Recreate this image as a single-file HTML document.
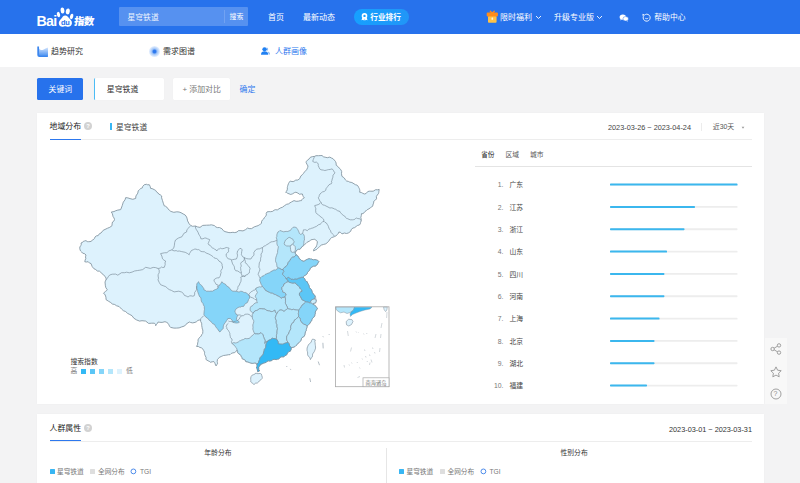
<!DOCTYPE html>
<html><head><meta charset="utf-8"><title>百度指数</title>
<style>
*{box-sizing:border-box;margin:0;padding:0}
html,body{width:800px;height:483px;overflow:hidden;background:#f3f3f4}
body{font-family:"Liberation Sans","Noto Sans CJK SC",sans-serif;font-size:8px;color:#333;position:relative;-webkit-font-smoothing:antialiased}
.page *{position:absolute}
.page{position:absolute;left:0;top:0;width:800px;height:483px;overflow:hidden}
.t{white-space:nowrap;line-height:1}
.hdr{left:0;top:0;width:800px;height:34px;background:#2772ec}
.hdr .t{color:#fff;font-size:8px}
.sub{left:0;top:34px;width:800px;height:32.8px;background:#fff}
.card{background:#fff;box-shadow:0 0 2px rgba(0,0,0,.03)}
.rk{left:490px;width:60px;height:10px;font-size:6.8px;line-height:10px;color:#444;white-space:nowrap}
.rk .no{right:46.5px;top:0;text-align:right;color:#777}
.rk .nm{left:19.4px;top:0}
.bar{left:610px;width:127.5px;height:1.7px;background:#ececec}
.bar i{left:0;top:0;height:1.7px;background:#3bb7ee;display:block}
.q{width:8px;height:8px;border-radius:50%;background:#d2d2d2;color:#fff;font-size:5.8px;line-height:8px;text-align:center;font-weight:bold}
</style></head><body>
<div class="page">
<!-- header -->
<div class="hdr">
  <div class="t" style="left:36.4px;top:14.200px;font-size:14.2px;font-weight:bold;letter-spacing:-0.7px">Bai</div>
  <svg style="left:56px;top:6px" width="18" height="22" viewBox="0 0 18 22">
    <ellipse cx="2.500" cy="8.600" rx="1.600" ry="2.800" fill="#fff" transform="rotate(-15 2.500 8.600)"/>
    <ellipse cx="6.500" cy="4.500" rx="1.900" ry="3" fill="#fff" transform="rotate(-5 6.500 4.500)"/>
    <ellipse cx="11.800" cy="5.400" rx="2" ry="3" fill="#fff" transform="rotate(8 11.800 5.400)"/>
    <ellipse cx="15.600" cy="10.400" rx="1.600" ry="2.800" fill="#fff" transform="rotate(18 15.600 10.400)"/>
    <path d="M9.200 9.400c2 0 3 1.800 4.200 3.200 1.400 1.600 2.800 2.600 2.500 4.800-.3 2.200-2.200 3.300-3.800 3.300-1.200 0-1.800-.5-2.900-.5s-1.700.5-2.900.5c-1.600 0-3.300-1-3.500-3.200-.2-2.200 1.100-3.300 2.400-4.800C6.400 11.200 7.200 9.400 9.200 9.400z" fill="#fff"/>
    <text x="9.200" y="19.200" font-size="7.400" font-weight="bold" text-anchor="middle" fill="#2772ec" font-family="Liberation Sans, sans-serif" letter-spacing="-.4">du</text>
  </svg>
  <div class="t" style="left:73.6px;top:16.900px;font-size:10.4px;font-weight:900;letter-spacing:-0.6px;transform:skewX(-6deg)">指数</div>
  <div style="left:119px;top:7.2px;width:129px;height:18.600px;background:rgba(255,255,255,0.22);border-radius:1px"></div>
  <div style="left:224px;top:10px;width:1px;height:13px;background:rgba(255,255,255,0.16)"></div>
  <div class="t" style="left:127.5px;top:13.700px;font-size:7.8px;color:rgba(255,255,255,0.9)">星穹铁道</div>
  <div class="t" style="left:229.5px;top:13.900px;font-size:6.900px">搜索</div>
  <div class="t" style="left:268px;top:13.700px">首页</div>
  <div class="t" style="left:303px;top:13.700px">最新动态</div>
  <div style="left:353.8px;top:9px;width:55px;height:16px;border-radius:8px;background:linear-gradient(90deg,#16a0ff,#2196f7)"></div>
  <svg style="left:360.800px;top:13.200px" width="7" height="7.600" viewBox="0 0 7 7.600">
    <path d="M1.300 4.400L.5 7.300l1.700-.5.900 1 .4-2.400M5.700 4.400l.8 2.900-1.700-.5-.9 1-.4-2.400" fill="#fff"/>
    <circle cx="3.500" cy="2.900" r="2.800" fill="#fff"/>
    <circle cx="3.500" cy="2.900" r="1.200" fill="#1b9ffd"/>
  </svg>
  <div class="t" style="left:370.200px;top:13.900px;font-weight:bold;font-size:7.700px">行业排行</div>
  <svg style="left:485.500px;top:9.500px" width="13" height="14" viewBox="0 0 13 14">
    <path d="M6.200 3.200L4.300 1.300M6.200 3.200L8.300 1.300" stroke="#ff8c1a" stroke-width="1.300" stroke-linecap="round" fill="none"/>
    <rect x="2" y="6" width="8.600" height="6.700" rx=".9" fill="#ffc247"/>
    <rect x=".7" y="2.600" width="11.200" height="4" rx="1" fill="#ff8c1a"/>
    <rect x="5.500" y="7.600" width="1.600" height="2.200" rx=".3" fill="#fff6dc"/>
  </svg>
  <div class="t" style="left:500px;top:13.700px">限时福利</div>
  <svg style="left:535px;top:15px" width="7" height="5" viewBox="0 0 7 5"><path d="M1 1l2.500 2.500L6 1" fill="none" stroke="#fff" stroke-width=".9"/></svg>
  <div class="t" style="left:554px;top:13.700px">升级专业版</div>
  <svg style="left:595.5px;top:15px" width="7" height="5" viewBox="0 0 7 5"><path d="M1 1l2.500 2.500L6 1" fill="none" stroke="#fff" stroke-width=".9"/></svg>
  <svg style="left:618.600px;top:13.600px" width="10.200" height="8" viewBox="0 0 12 10">
    <ellipse cx="4.400" cy="3.800" rx="4" ry="3.300" fill="#fff"/>
    <path d="M1.800 6.200L1.200 8l2-1z" fill="#fff"/>
    <ellipse cx="8" cy="6" rx="3.400" ry="2.800" fill="#fff" stroke="#2772ec" stroke-width=".6"/>
    <path d="M10 8.200l.6 1.400-1.700-.8z" fill="#fff"/>
  </svg>
  <svg style="left:642px;top:12.800px" width="9" height="9" viewBox="0 0 10 10">
    <path d="M5.200 1.300a3.900 3.900 0 1 1-3.700 2.600L.9 1.500l2 .8a3.900 3.900 0 0 1 2.300-1z" fill="none" stroke="#fff" stroke-width="1" stroke-linejoin="round"/>
    <path d="M3.500 5.600c.5.900 2.600 1 3.400 0" fill="none" stroke="#fff" stroke-width=".9"/>
  </svg>
  <div class="t" style="left:654.300px;top:13.800px;font-size:7.800px">帮助中心</div>
</div>
<!-- sub nav -->
<div class="sub">
  <svg style="left:36.800px;top:11.500px" width="11.200" height="11.400" viewBox="0 0 11 11">
    <defs><linearGradient id="tg" x1="0" y1="0" x2="0" y2="1"><stop offset="0" stop-color="#d3e4fc"/><stop offset="1" stop-color="#4d93f1"/></linearGradient></defs>
    <path d="M1.500 1.600c1.500 2.300 3 2.800 4.500 2 1.500-.8 3-1.900 4.800-2.300v8.200H1.500z" fill="url(#tg)"/>
    <path d="M.3.300h1.700v7.700a.9.900 0 0 0 .9.900h7.800v1.800H2.300a2 2 0 0 1-2-2z" fill="#3b86ee"/>
  </svg>
  <div class="t" style="left:51px;top:14px;color:#333">趋势研究</div>
  <div style="left:148.500px;top:12px;width:11px;height:11px;border-radius:50%;background:radial-gradient(circle,#2d78ee 0,#2d78ee 17%,#9dc3f8 34%,#d9e8fd 62%,rgba(255,255,255,0) 95%)"></div>
  <div class="t" style="left:163px;top:14px;color:#333">需求图谱</div>
  <svg style="left:260.600px;top:13px" width="9.200" height="7.800" viewBox="0 0 11 10" preserveAspectRatio="none">
    <path d="M7 .8a2.300 2.300 0 0 1 0 4.400M8 5.800c1.800.4 2.900 1.600 2.900 3.700H9.300" fill="#8dbdf8"/>
    <ellipse cx="4.300" cy="2.800" rx="2.700" ry="2.500" fill="#2080f2"/>
    <path d="M0 9.800c0-3 1.800-4.300 4.300-4.300s4.300 1.300 4.300 4.300z" fill="#2080f2"/>
  </svg>
  <div class="t" style="left:275px;top:14px;color:#2d78ee">人群画像</div>
</div>
<!-- keyword row -->
<div style="left:37.2px;top:78px;width:45.8px;height:22px;background:#2772ec;border-radius:1.5px"></div>
<div class="t" style="left:48.6px;top:86.200px;color:#fff;font-size:7.8px">关键词</div>
<div style="left:94.4px;top:78px;width:69.600px;height:22px;background:#fff;border-left:1.8px solid #4cbcf5;border-radius:1.5px;box-shadow:0 0 1px rgba(0,0,0,.06)"></div>
<div class="t" style="left:106.8px;top:86.200px;color:#333;font-size:7.9px">星穹铁道</div>
<div style="left:173px;top:78px;width:56.5px;height:22px;background:#fff;border-radius:1.5px;box-shadow:0 0 1px rgba(0,0,0,.06)"></div>
<div class="t" style="left:182.5px;top:86.200px;color:#777;font-size:7.9px">+ 添加对比</div>
<div class="t" style="left:239.5px;top:86.200px;color:#2d78ee;font-size:7.9px">确定</div>

<!-- card 1 -->
<div class="card" style="left:37.3px;top:113px;width:726.600px;height:291.400px"></div>
<div class="t" style="left:49.5px;top:123.300px;font-size:7.9px;color:#222">地域分布</div>
<div class="q" style="left:84px;top:122.300px">?</div>
<div style="left:49.5px;top:139px;width:702px;height:1px;background:#ededed"></div>
<div style="left:49.5px;top:138.600px;width:31.5px;height:1.2px;background:#2d78ee"></div>
<div style="left:110px;top:123px;width:1.9px;height:7px;background:#38b6f3"></div>
<div class="t" style="left:116px;top:124px;font-size:7.8px;color:#444">星穹铁道</div>
<div class="t" style="left:608px;top:123.700px;font-size:7.3px;color:#444">2023-03-26 ~ 2023-04-24</div>
<div style="left:701px;top:123px;width:1px;height:8px;background:#ececec"></div>
<div class="t" style="left:712.8px;top:123.900px;font-size:6.9px;color:#555">近30天</div>
<svg style="left:741px;top:126.300px" width="4" height="3.5" viewBox="0 0 5 4"><path d="M.8.800h3.400L2.500 3.200z" fill="#999"/></svg>

<svg style="left:0;top:0" width="800" height="483" viewBox="0 0 800 483">
<polygon points="80.6,251.0 80.2,250.1 79.8,248.8 79.8,247.0 80.8,245.6 81.3,244.2 81.0,243.0 82.7,242.3 83.5,241.2 84.5,241.0 86.0,240.6 87.2,241.6 88.7,241.7 90.0,241.6 91.0,241.4 92.2,240.3 93.9,239.2 94.5,238.4 95.0,237.0 96.3,235.9 98.2,235.6 99.3,233.8 101.0,233.0 103.2,230.3 107.6,228.2 109.8,227.3 112.0,225.7 112.1,223.9 112.5,222.0 114.1,220.8 114.5,219.5 114.0,217.9 113.1,216.7 112.4,213.8 111.3,212.0 114.0,211.6 115.5,210.8 117.8,210.1 120.7,209.6 122.2,205.7 123.3,202.1 125.0,199.9 125.7,197.6 127.9,197.9 130.0,198.6 132.8,199.3 135.7,198.4 135.9,196.0 137.8,193.1 138.2,190.9 139.4,189.7 140.7,188.5 142.4,187.8 142.8,186.3 144.3,184.7 146.5,184.3 147.7,184.8 149.3,184.7 150.2,186.5 150.6,188.4 152.1,188.6 154.2,189.6 155.6,190.4 156.8,192.2 158.2,193.1 158.8,194.1 160.3,194.8 161.7,196.0 161.6,197.8 162.5,200.6 163.3,203.2 164.2,205.8 165.4,206.2 166.8,207.1 168.0,208.9 169.2,210.0 170.8,211.4 173.8,212.3 176.8,211.8 179.1,212.0 181.0,212.7 183.1,213.9 185.2,215.0 186.6,217.0 187.2,218.9 187.6,220.9 189.2,223.9 190.8,225.5 192.5,226.3 193.9,226.2 195.4,226.0 197.5,226.9 200.0,227.4 202.7,225.4 206.6,225.2 209.4,225.1 211.4,224.8 214.4,225.6 215.9,227.0 217.5,227.6 219.4,227.5 221.9,228.7 223.4,230.7 225.0,231.6 227.0,232.1 228.9,232.6 230.8,232.6 232.9,232.3 234.8,232.6 237.1,232.0 238.3,230.7 240.1,230.6 243.0,230.9 245.6,229.6 247.6,228.0 249.1,228.6 251.6,228.6 254.2,226.9 256.9,226.0 258.2,225.6 259.5,224.7 260.5,224.1 261.5,223.3 261.5,221.8 262.3,220.1 263.7,219.0 264.3,217.7 265.2,216.8 266.4,215.0 266.2,213.4 267.0,211.9 269.1,211.6 270.7,211.7 272.7,211.3 274.1,210.2 275.3,209.7 277.3,209.9 280.3,208.0 282.5,207.2 284.6,205.6 286.6,204.3 288.5,203.9 290.0,202.8 291.6,201.9 294.0,200.6 296.1,201.3 298.3,201.2 300.2,200.7 301.5,200.6 301.9,199.6 302.8,198.6 304.3,197.8 303.2,196.4 302.7,195.2 302.4,194.0 300.9,194.0 299.6,194.3 297.9,193.1 295.9,192.2 294.3,192.7 292.6,193.8 291.2,194.3 290.3,194.4 289.1,193.8 287.6,193.3 286.7,192.5 285.6,192.2 286.8,191.0 287.4,189.1 287.3,187.6 287.5,186.6 287.9,185.2 288.6,183.3 289.4,182.1 290.3,181.0 292.0,181.6 293.9,181.4 295.7,180.1 297.8,180.0 299.6,178.8 300.9,175.9 302.4,174.7 303.4,173.5 304.5,171.9 306.6,169.8 307.6,167.7 308.0,166.0 306.9,164.2 306.1,162.4 306.4,161.3 307.3,160.3 308.9,159.2 309.9,157.7 310.9,157.1 312.6,156.6 314.5,156.4 316.0,155.7 318.6,155.7 320.1,155.6 322.0,155.5 323.5,156.8 325.1,157.2 327.3,157.7 329.8,157.1 331.6,158.1 332.9,158.6 334.3,160.1 335.4,161.4 336.1,163.0 336.2,165.2 337.9,166.5 339.1,168.0 340.8,169.6 341.7,171.6 341.5,173.7 341.9,176.3 343.1,177.1 344.3,178.0 345.4,179.9 346.6,181.0 348.4,181.4 349.7,182.1 351.9,182.5 354.0,183.8 355.6,184.8 357.1,185.1 357.9,185.9 358.7,187.5 359.3,188.5 359.7,189.7 359.9,190.9 359.6,192.2 361.3,192.5 362.4,193.1 364.3,194.0 366.1,193.5 367.7,191.6 369.2,191.2 370.8,191.2 373.2,191.2 375.7,189.7 377.4,189.8 379.2,189.4 378.9,191.2 378.8,192.3 378.4,193.7 377.3,195.0 376.4,196.4 376.5,198.8 375.4,200.1 373.6,201.5 373.7,203.0 373.2,203.9 372.7,206.0 371.7,207.0 370.3,207.8 369.0,208.8 367.1,209.8 366.1,210.8 365.1,211.4 364.2,212.7 362.9,213.6 361.5,213.6 361.3,215.6 360.8,217.6 361.2,219.1 361.3,220.5 360.6,222.4 360.3,223.8 359.4,225.0 357.6,225.4 356.4,226.3 354.5,227.7 353.0,228.0 351.4,229.3 350.6,231.4 348.3,233.0 346.4,233.5 344.4,233.0 342.0,233.9 340.5,232.4 338.9,232.0 338.5,233.2 337.6,234.3 336.0,235.8 334.3,236.7 331.6,237.6 330.1,239.0 328.6,241.4 325.9,243.8 323.3,244.5 321.3,245.1 319.7,246.5 318.5,247.6 317.5,248.5 316.3,249.7 315.2,250.0 313.6,251.0 313.7,249.7 314.6,248.3 316.1,247.0 316.6,245.5 317.0,244.4 317.2,243.2 317.4,241.8 316.6,240.6 315.8,240.1 314.8,239.3 313.2,239.4 312.1,239.6 311.0,239.8 310.4,240.4 309.3,241.2 308.0,241.8 306.7,242.6 305.9,243.5 304.7,244.5 303.5,245.6 301.7,246.8 300.9,248.3 299.8,249.2 298.6,249.1 297.6,249.6 296.0,251.0 295.5,251.9 295.0,253.0 296.0,254.8 297.9,256.1 298.7,257.5 299.3,258.8 300.7,259.6 301.9,260.8 304.0,261.4 304.8,260.8 306.2,259.8 307.5,259.3 309.1,258.7 310.4,259.1 311.5,259.1 313.4,259.9 314.7,259.6 316.4,260.0 317.6,260.3 318.8,261.5 317.8,263.1 317.5,264.3 316.2,265.0 315.6,266.1 313.7,266.0 311.9,267.0 310.2,268.3 309.7,269.8 309.1,270.7 308.2,271.7 307.5,272.5 306.9,273.9 305.7,275.1 304.5,275.5 303.7,276.4 303.5,277.5 304.7,278.8 305.3,280.5 306.1,281.3 307.2,281.7 307.7,283.2 308.7,284.8 309.2,286.4 309.4,287.5 310.5,289.0 311.4,289.6 312.0,291.3 312.3,292.6 312.9,293.6 314.1,294.6 315.2,296.2 315.6,297.5 315.7,298.5 316.3,300.5 316.0,301.5 315.5,303.0 314.1,303.1 312.5,304.0 314.4,305.1 316.0,306.4 316.7,307.5 317.4,308.6 316.1,310.4 315.2,312.2 315.3,313.4 314.9,314.4 314.7,315.8 313.8,317.2 312.4,318.4 311.9,319.4 311.6,320.9 310.6,321.6 310.0,323.1 308.7,324.5 307.9,325.4 307.0,326.0 306.8,327.9 306.2,329.5 306.1,330.7 305.4,331.8 304.9,333.9 304.8,334.9 304.2,336.3 302.1,337.5 301.3,338.8 300.8,340.8 299.6,341.9 298.2,343.0 297.0,344.7 295.8,345.6 294.9,346.6 293.0,347.3 291.2,347.5 291.1,349.3 290.3,351.2 288.9,351.5 288.1,352.3 287.1,353.8 286.6,354.9 285.0,355.6 283.9,356.8 282.7,356.8 281.0,356.8 280.0,357.7 278.7,358.9 277.6,359.1 276.3,359.6 274.2,359.3 272.8,359.6 271.7,360.5 269.7,361.0 268.4,360.8 267.1,361.3 266.1,362.4 264.5,362.8 263.1,363.2 262.1,363.9 260.5,364.2 259.9,365.8 258.6,367.0 258.7,368.3 258.7,369.5 259.6,370.8 257.7,371.7 257.4,370.0 257.2,368.7 256.4,368.0 257.0,366.5 257.1,365.4 256.8,364.2 255.9,363.0 254.8,362.9 253.4,363.2 252.2,363.3 250.9,363.0 249.2,362.5 248.0,361.9 245.8,361.6 245.2,360.1 244.3,359.5 242.2,358.7 242.0,357.4 241.2,356.3 240.8,355.2 240.0,354.3 238.4,353.5 237.7,352.4 237.7,351.3 237.1,350.0 236.4,351.1 235.6,351.9 234.3,352.7 232.8,352.9 231.2,353.5 230.0,354.7 228.6,354.7 227.0,355.0 225.2,355.3 223.4,355.5 222.5,355.9 221.2,356.5 219.3,357.4 218.7,358.2 217.5,359.4 217.2,361.4 217.4,362.4 217.5,363.8 216.8,364.7 216.1,365.9 215.5,365.0 215.1,363.7 214.6,362.5 213.9,361.6 212.2,361.8 210.3,362.3 209.7,361.6 208.3,360.9 206.9,360.1 205.9,359.4 206.1,357.6 205.3,355.9 204.7,354.6 204.5,353.6 204.6,352.2 203.6,350.3 202.6,348.9 201.6,347.8 199.9,347.5 198.7,346.6 196.5,346.4 197.5,344.8 197.7,342.9 198.1,341.4 198.0,339.9 198.8,338.3 199.9,337.3 201.2,336.0 201.6,334.8 202.7,333.4 202.8,331.5 202.8,329.9 202.3,329.0 202.1,327.6 201.7,325.4 201.7,324.1 201.6,323.2 200.7,321.5 200.5,320.0 199.1,320.0 197.8,320.5 196.5,321.7 195.0,322.4 192.7,322.9 190.7,322.5 189.5,322.0 188.0,322.8 185.9,324.4 184.6,326.0 181.7,326.9 179.1,327.9 176.4,328.1 173.9,328.1 170.6,327.4 169.5,326.2 168.6,324.2 168.0,323.3 166.8,322.4 165.0,321.7 162.1,322.4 159.8,322.3 158.1,322.0 157.3,323.6 156.3,324.4 155.7,325.7 155.6,324.5 154.4,323.2 151.7,323.2 148.6,323.4 145.7,321.1 142.0,320.7 139.6,321.1 136.5,319.9 133.8,318.2 132.0,315.7 129.8,314.5 127.6,313.4 125.7,311.6 123.4,310.7 121.6,309.1 119.1,306.5 116.6,305.8 114.7,304.5 112.3,304.0 110.8,302.6 108.3,301.1 106.0,299.6 106.0,297.8 105.6,296.0 104.7,294.1 103.5,293.4 104.2,292.5 105.5,291.4 106.6,290.6 107.2,289.6 105.9,287.8 105.4,285.8 105.0,282.0 106.0,279.7 106.0,278.2 105.4,276.7 104.1,275.7 103.5,274.7 101.8,273.6 100.7,272.1 99.5,271.2 97.3,271.0 95.8,269.6 93.9,268.7 92.2,266.6 91.0,263.5 89.5,263.1 88.2,261.7 86.5,262.0 84.8,261.8 85.1,260.2 85.8,258.5 85.5,256.9 86.0,255.0 84.8,253.8 82.7,253.2 81.7,252.0" fill="#DDF2FD" stroke="#80919d" stroke-width="0.85" stroke-linejoin="round"/>
<polygon points="277.0,240.2 276.8,239.1 276.3,237.6 276.9,236.3 276.8,234.9 277.4,233.1 278.0,231.9 278.9,231.6 279.9,230.5 281.1,230.9 282.1,231.3 283.6,231.8 286.1,231.4 287.9,231.5 289.0,230.9 290.4,230.5 291.4,228.9 292.9,227.4 294.1,227.1 296.0,227.4 297.1,228.4 297.6,229.2 298.5,231.1 299.0,232.1 299.2,233.2 300.4,234.3 301.5,234.0 302.6,233.5 303.7,234.4 304.4,236.4 304.3,238.1 304.5,240.0 304.0,240.8 303.9,242.1 303.8,243.8 303.5,245.6 301.7,246.8 300.9,248.3 299.8,249.2 298.6,249.1 297.6,249.6 296.0,251.0 295.5,251.9 295.0,253.0 296.0,254.8 295.2,256.0 294.0,257.1 292.7,257.1 291.7,257.9 290.6,258.9 290.2,260.4 289.2,261.2 288.0,262.8 287.8,264.1 286.9,265.3 286.0,266.6 284.8,267.2 283.4,268.5 283.0,269.7 281.2,269.4 279.6,268.4 278.4,268.0 277.0,267.0 276.8,265.2 276.6,263.4 275.7,261.8 275.5,260.5 275.6,259.3 275.9,257.3 276.5,255.6 277.0,254.0 277.6,252.6 277.6,251.0 278.0,248.8 278.4,246.7 277.3,245.3 276.9,243.6 276.9,242.2" fill="#B4E6FB" stroke="#80919d" stroke-width="0.7" stroke-linejoin="round"/>
<polygon points="284.8,241.7 285.4,240.2 286.7,239.2 288.2,237.8 289.8,237.4 291.2,238.4 292.9,239.2 293.2,240.3 294.2,241.7 293.5,243.4 292.5,244.2 291.2,245.4 289.8,246.0 288.6,246.0 286.7,246.0 285.7,245.4 284.6,244.8 284.2,243.3" fill="#C9EDFC" stroke="#80919d" stroke-width="0.7" stroke-linejoin="round"/>
<polygon points="292.5,244.2 294.2,245.4 295.1,246.4 295.3,247.5 295.4,249.2 295.1,250.7 295.0,252.3 294.0,252.0 292.6,252.4 291.0,251.6 290.6,249.5 290.4,247.9 290.3,246.7 290.8,245.5" fill="#DDF2FD" stroke="#80919d" stroke-width="0.7" stroke-linejoin="round"/>
<polygon points="198.7,281.7 199.3,283.6 200.7,284.7 201.6,285.4 202.8,287.2 203.7,288.2 203.8,289.7 205.3,290.3 206.2,291.2 208.1,291.2 209.9,291.3 210.9,291.1 212.5,291.2 214.2,290.1 215.5,289.5 216.8,289.0 218.3,287.9 218.4,286.5 219.0,285.4 220.0,284.8 220.8,283.5 221.9,281.7 223.3,283.3 224.8,283.9 226.0,284.7 226.5,285.9 228.4,286.8 229.2,288.0 230.1,288.6 231.3,290.4 232.9,291.2 234.9,291.2 236.5,291.4 238.5,291.9 239.8,291.8 240.7,291.2 242.1,291.4 243.5,292.2 244.7,292.6 245.8,292.6 247.1,293.5 248.7,294.8 249.4,295.9 249.6,296.9 249.4,298.4 248.5,299.5 248.1,301.0 247.2,302.8 245.5,303.5 244.7,304.6 243.6,306.4 241.7,306.4 240.6,307.1 239.3,307.1 238.1,307.5 237.1,308.2 235.7,309.3 235.2,310.5 234.9,312.2 235.7,312.9 236.1,314.3 237.8,315.1 237.3,316.3 236.8,317.4 236.4,319.4 237.1,320.1 238.3,320.9 239.3,322.3 238.2,322.8 236.4,323.0 234.5,322.7 232.8,322.3 232.6,321.3 231.9,319.9 230.6,318.7 229.1,318.4 227.7,318.7 226.9,320.4 226.2,321.0 225.5,322.3 224.1,324.1 223.4,325.8 223.2,327.1 223.3,328.5 222.0,329.6 221.0,330.4 220.0,332.0 219.0,331.3 218.3,330.1 217.3,328.5 216.2,327.6 215.6,326.6 215.1,325.7 214.6,324.5 212.7,323.7 211.7,322.6 210.3,320.9 209.2,320.3 208.3,319.1 207.3,318.0 205.9,317.2 204.8,315.9 203.8,314.3 204.0,313.3 204.1,311.8 204.3,310.3 204.5,309.3 204.3,308.0 204.3,306.4 203.4,304.9 203.0,303.5 201.8,302.1 201.3,301.1 201.0,299.1 200.9,297.7 199.8,296.9 199.3,296.0 198.7,294.5 198.0,292.6 197.6,291.6 197.6,290.4 196.7,288.8 196.5,286.8 196.8,285.2 196.8,283.9 197.7,282.6" fill="#85D5F9" stroke="#80919d" stroke-width="0.7" stroke-linejoin="round"/>
<polygon points="260.1,278.1 261.1,277.3 262.1,276.3 263.9,275.7 265.0,274.5 266.7,273.8 268.0,273.2 269.7,272.8 270.7,271.6 272.0,271.1 274.0,269.9 275.5,270.0 277.1,268.9 278.4,268.0 279.6,268.4 281.2,269.4 283.0,269.7 284.0,271.6 282.9,272.9 282.6,274.5 283.5,275.4 284.5,276.5 285.4,277.3 286.2,278.8 287.7,279.9 288.4,281.7 287.5,282.0 286.1,282.4 285.2,283.5 284.0,283.9 283.4,286.0 281.9,287.5 281.9,289.4 282.7,290.7 282.6,291.9 284.7,292.6 286.2,294.0 285.7,295.6 284.8,297.0 283.9,297.4 282.6,297.4 281.2,298.4 280.6,297.6 279.5,296.8 278.3,296.2 276.8,295.5 275.5,294.6 274.1,294.3 272.5,293.3 270.6,293.1 269.7,292.5 268.1,291.9 267.1,291.2 265.6,290.6 264.5,289.0 263.3,287.3 262.3,286.5 261.7,285.0 260.9,284.1 260.8,283.0 260.1,281.7 259.7,280.2" fill="#85D5F9" stroke="#80919d" stroke-width="0.7" stroke-linejoin="round"/>
<polygon points="296.0,254.8 297.9,256.1 298.7,257.5 299.3,258.8 300.7,259.6 301.9,260.8 304.0,261.4 304.8,260.8 306.2,259.8 307.5,259.3 309.1,258.7 310.4,259.1 311.5,259.1 313.4,259.9 314.7,259.6 316.4,260.0 317.6,260.3 318.8,261.5 317.8,263.1 317.5,264.3 316.2,265.0 315.6,266.1 313.7,266.0 311.9,267.0 310.2,268.3 309.7,269.8 309.1,270.7 308.2,271.7 307.5,272.5 306.9,273.9 305.7,275.1 304.5,275.5 303.7,276.4 303.5,277.5 301.8,277.3 300.0,278.1 298.6,278.3 297.0,279.3 295.0,279.1 293.5,279.6 292.1,279.2 291.0,279.5 289.6,278.0 288.4,277.4 287.4,278.0 286.2,278.8 285.4,277.3 284.5,276.5 283.5,275.4 282.6,274.5 282.9,272.9 284.0,271.6 283.0,269.7 283.4,268.5 284.8,267.2 286.0,266.6 286.9,265.3 287.8,264.1 288.0,262.8 289.2,261.2 290.2,260.4 290.6,258.9 291.7,257.9 292.7,257.1 294.0,257.1 295.2,256.0" fill="#85D5F9" stroke="#80919d" stroke-width="0.7" stroke-linejoin="round"/>
<polygon points="288.4,281.7 289.7,282.4 291.3,282.8 292.9,283.1 294.9,282.8 296.0,283.5 297.1,285.0 298.5,286.0 299.7,287.1 300.0,288.3 300.7,289.1 301.6,289.9 302.2,291.2 300.7,291.9 299.7,292.8 299.3,294.0 299.6,295.3 300.0,296.2 300.9,297.0 301.2,298.1 302.2,299.9 304.1,300.6 305.8,301.8 304.4,303.1 303.6,304.2 302.0,305.2 301.2,306.7 300.7,307.8 299.3,309.0 298.6,310.7 297.5,310.1 296.4,310.0 294.9,309.8 293.5,309.3 291.8,309.8 290.6,309.3 288.8,309.0 287.7,308.6 287.3,307.0 286.8,306.1 286.2,304.9 285.5,303.7 285.3,302.8 285.5,301.3 285.4,300.2 285.5,298.9 284.8,297.0 285.7,295.6 286.2,294.0 284.7,292.6 282.6,291.9 282.7,290.7 281.9,289.4 281.9,287.5 283.4,286.0 284.0,283.9 285.2,283.5 286.1,282.4 287.5,282.0" fill="#B4E6FB" stroke="#80919d" stroke-width="0.7" stroke-linejoin="round"/>
<polygon points="288.4,277.4 289.6,278.0 291.0,279.5 292.1,279.2 293.5,279.6 295.0,279.1 297.0,279.3 298.6,278.3 300.0,278.1 301.8,277.3 303.5,277.5 304.7,278.8 305.3,280.5 306.1,281.3 307.2,281.7 307.7,283.2 308.7,284.8 309.2,286.4 309.4,287.5 310.5,289.0 311.4,289.6 312.0,291.3 312.3,292.6 312.9,293.6 314.1,294.6 315.2,296.2 314.5,297.6 314.5,299.1 313.1,299.3 311.6,299.9 310.7,301.7 309.4,302.8 308.1,302.1 306.8,302.1 305.8,301.8 304.1,300.6 302.2,299.9 301.2,298.1 300.9,297.0 300.0,296.2 299.6,295.3 299.3,294.0 299.7,292.8 300.7,291.9 302.2,291.2 301.6,289.9 300.7,289.1 300.0,288.3 299.7,287.1 298.5,286.0 297.1,285.0 296.0,283.5 294.9,282.8 292.9,283.1 291.3,282.8 289.7,282.4 288.4,281.7 287.7,279.9 286.2,278.8 287.4,278.0" fill="#5BC6F6" stroke="#80919d" stroke-width="0.7" stroke-linejoin="round"/>
<polygon points="314.5,299.1 315.5,299.9 316.3,300.5 316.0,301.5 315.5,303.0 314.1,303.1 312.5,304.0 311.2,303.0 309.4,302.8 310.7,301.7 311.6,299.9 313.1,299.3" fill="#C9EDFC" stroke="#80919d" stroke-width="0.7" stroke-linejoin="round"/>
<polygon points="305.8,301.8 306.8,302.1 308.1,302.1 309.4,302.8 311.2,303.0 312.5,304.0 314.4,305.1 316.0,306.4 316.7,307.5 317.4,308.6 316.1,310.4 315.2,312.2 315.3,313.4 314.9,314.4 314.7,315.8 313.8,317.2 312.4,318.4 311.9,319.4 311.6,320.9 310.6,321.6 310.0,323.1 308.7,324.5 307.9,325.4 307.0,326.0 306.3,325.2 305.2,324.7 303.3,324.0 302.1,323.0 301.3,321.9 300.6,321.0 300.3,319.3 299.8,317.9 298.5,316.5 298.6,315.1 298.2,313.7 298.5,312.5 298.6,310.7 299.3,309.0 300.7,307.8 301.2,306.7 302.0,305.2 303.6,304.2 304.4,303.1" fill="#85D5F9" stroke="#80919d" stroke-width="0.7" stroke-linejoin="round"/>
<polygon points="255.9,288.3 257.0,287.6 258.0,287.3 259.6,286.8 260.7,287.0 262.3,286.5 263.3,287.3 264.5,289.0 265.6,290.6 267.1,291.2 268.1,291.9 269.7,292.5 270.6,293.1 272.5,293.3 274.1,294.3 275.5,294.6 276.8,295.5 278.3,296.2 279.5,296.8 280.6,297.6 281.2,298.4 282.6,297.4 283.9,297.4 284.8,297.0 285.5,298.9 285.4,300.2 285.5,301.3 285.3,302.8 285.5,303.7 286.2,304.9 286.8,306.1 287.3,307.0 287.7,308.6 286.6,309.4 285.5,310.2 284.0,311.5 282.9,310.7 282.1,310.1 280.0,310.0 279.1,310.5 278.1,311.7 277.3,312.9 277.0,313.8 276.2,313.1 275.2,312.1 274.8,310.1 273.5,311.0 272.5,311.5 271.2,311.6 269.5,311.0 268.2,310.8 266.7,310.4 265.4,309.4 264.1,308.9 263.1,309.0 261.3,308.7 259.6,308.7 258.6,309.2 257.7,310.2 256.4,310.5 255.2,310.9 253.9,311.9 253.0,313.6 252.3,312.4 251.5,311.9 250.5,310.9 250.1,310.0 250.2,307.9 250.9,306.4 252.4,305.9 252.8,305.1 253.8,304.2 255.0,303.1 256.3,302.7 257.4,302.8 256.8,301.4 256.7,299.9 256.5,298.4 255.9,297.7 255.2,296.2 256.2,294.4 257.4,292.6 256.5,290.6 255.9,289.7" fill="#B4E6FB" stroke="#80919d" stroke-width="0.7" stroke-linejoin="round"/>
<polygon points="255.2,310.9 256.4,310.5 257.7,310.2 258.6,309.2 259.6,308.7 261.3,308.7 263.1,309.0 264.1,308.9 265.4,309.4 266.7,310.4 268.2,310.8 269.5,311.0 271.2,311.6 272.5,311.5 273.5,311.0 274.8,310.1 275.2,312.1 276.2,313.1 277.0,313.8 276.3,314.4 275.9,315.9 275.3,317.5 275.5,318.8 276.3,320.4 276.2,322.2 276.3,323.4 277.0,324.6 277.0,326.9 277.5,328.4 277.2,330.2 277.0,331.9 277.0,333.5 276.6,334.6 276.4,335.7 276.5,337.0 276.4,338.4 277.2,340.0 276.1,339.1 275.0,338.7 273.8,338.6 272.6,338.2 271.2,338.9 270.5,339.8 268.9,340.1 267.9,341.0 266.1,341.8 265.2,342.3 264.6,343.5 264.9,342.0 265.1,340.0 264.3,338.9 263.9,337.7 263.4,336.3 263.1,334.9 262.2,333.9 261.0,332.6 260.0,333.5 258.4,334.0 256.6,333.9 255.2,334.0 254.5,333.3 253.8,332.0 253.4,330.8 252.8,329.1 253.0,327.5 252.9,326.1 252.8,324.9 253.3,323.6 253.8,321.7 253.6,320.4 252.7,319.1 252.3,318.0 252.3,316.7 252.2,314.7 253.0,313.6 253.9,311.9" fill="#B4E6FB" stroke="#80919d" stroke-width="0.7" stroke-linejoin="round"/>
<polygon points="277.0,313.8 277.3,312.9 278.1,311.7 279.1,310.5 280.0,310.0 282.1,310.1 282.9,310.7 284.0,311.5 285.5,310.2 286.6,309.4 287.7,308.6 288.8,309.0 290.6,309.3 291.8,309.8 293.5,309.3 294.9,309.8 296.4,310.0 297.5,310.1 298.6,310.7 298.5,312.5 298.2,313.7 298.6,315.1 298.5,316.5 297.9,317.5 296.5,318.5 295.7,319.4 294.6,319.9 294.0,321.4 293.5,322.5 292.0,323.3 291.2,325.1 290.6,327.0 290.9,328.5 290.2,330.1 289.3,331.7 288.4,334.3 286.9,335.7 286.7,337.0 286.6,339.0 287.1,340.8 287.8,342.0 288.4,342.8 287.5,342.5 286.1,342.9 284.7,343.3 283.8,343.8 282.5,344.2 280.3,344.1 278.2,343.8 278.2,341.8 277.2,340.0 276.4,338.4 276.5,337.0 276.4,335.7 276.6,334.6 277.0,333.5 277.0,331.9 277.2,330.2 277.5,328.4 277.0,326.9 277.0,324.6 276.3,323.4 276.2,322.2 276.3,320.4 275.5,318.8 275.3,317.5 275.9,315.9 276.3,314.4" fill="#B4E6FB" stroke="#80919d" stroke-width="0.7" stroke-linejoin="round"/>
<polygon points="298.5,316.5 299.8,317.9 300.3,319.3 300.6,321.0 301.3,321.9 302.1,323.0 303.3,324.0 305.2,324.7 306.3,325.2 307.0,326.0 306.8,327.9 306.2,329.5 306.1,330.7 305.4,331.8 304.9,333.9 304.8,334.9 304.2,336.3 302.1,337.5 301.3,338.8 300.8,340.8 299.6,341.9 298.2,343.0 297.0,344.7 295.8,345.6 294.9,346.6 293.0,347.3 291.2,347.5 290.1,346.6 289.3,345.1 289.2,343.9 288.4,342.8 287.8,342.0 287.1,340.8 286.6,339.0 286.7,337.0 286.9,335.7 288.4,334.3 289.3,331.7 290.2,330.1 290.9,328.5 290.6,327.0 291.2,325.1 292.0,323.3 293.5,322.5 294.0,321.4 294.6,319.9 295.7,319.4 296.5,318.5 297.9,317.5" fill="#B4E6FB" stroke="#80919d" stroke-width="0.7" stroke-linejoin="round"/>
<polygon points="232.0,343.5 233.8,342.6 235.3,343.0 236.4,342.8 238.2,342.1 239.5,340.9 240.7,340.6 241.8,339.9 243.4,339.6 245.1,338.4 246.2,338.7 247.9,338.6 249.3,338.4 250.1,337.7 250.7,336.8 251.9,335.9 253.3,334.7 254.5,333.3 255.2,334.0 256.6,333.9 258.4,334.0 260.0,333.5 261.0,332.6 262.2,333.9 263.1,334.9 263.4,336.3 263.9,337.7 264.3,338.9 265.1,340.0 264.9,342.0 264.6,343.5 265.2,342.3 266.1,341.8 267.9,341.0 266.9,342.2 266.1,343.8 265.9,344.9 265.8,346.2 265.6,347.4 265.1,348.4 264.2,349.7 264.1,350.9 263.6,352.1 263.3,354.0 262.6,354.9 261.6,356.1 259.9,357.9 259.6,359.6 258.7,361.5 258.4,362.8 256.8,364.2 255.9,363.0 254.8,362.9 253.4,363.2 252.2,363.3 250.9,363.0 249.2,362.5 248.0,361.9 245.8,361.6 245.2,360.1 244.3,359.5 242.2,358.7 242.0,357.4 241.2,356.3 240.8,355.2 240.0,354.3 238.4,353.5 237.7,352.4 237.7,351.3 237.1,350.0 236.8,348.8 236.2,347.6 234.9,346.4 233.9,344.8 232.6,344.2" fill="#B4E6FB" stroke="#80919d" stroke-width="0.7" stroke-linejoin="round"/>
<polygon points="267.9,341.0 268.9,340.1 270.5,339.8 271.2,338.9 272.6,338.2 273.8,338.6 275.0,338.7 276.1,339.1 277.2,340.0 278.2,341.8 278.2,343.8 280.3,344.1 282.5,344.2 283.8,343.8 284.7,343.3 286.1,342.9 287.5,342.5 288.4,342.8 289.2,343.9 289.3,345.1 290.1,346.6 291.2,347.5 291.1,349.3 290.3,351.2 288.9,351.5 288.1,352.3 287.1,353.8 286.6,354.9 285.0,355.6 283.9,356.8 282.7,356.8 281.0,356.8 280.0,357.7 278.7,358.9 277.6,359.1 276.3,359.6 274.2,359.3 272.8,359.6 271.7,360.5 269.7,361.0 268.4,360.8 267.1,361.3 266.1,362.4 264.5,362.8 263.1,363.2 262.1,363.9 260.5,364.2 259.9,365.8 258.6,367.0 258.7,368.3 258.7,369.5 259.6,370.8 257.7,371.7 257.4,370.0 257.2,368.7 256.4,368.0 257.0,366.5 257.1,365.4 256.8,364.2 258.4,362.8 258.7,361.5 259.6,359.6 259.9,357.9 261.6,356.1 262.6,354.9 263.3,354.0 263.6,352.1 264.1,350.9 264.2,349.7 265.1,348.4 265.6,347.4 265.8,346.2 265.9,344.9 266.1,343.8 266.9,342.2" fill="#33B9F5" stroke="#80919d" stroke-width="0.7" stroke-linejoin="round"/>
<polygon points="240.0,248.2 241.4,249.0 242.2,249.6 241.7,251.6 241.5,253.5 241.4,254.7 241.9,255.5 242.6,256.7 244.3,257.6 244.7,259.3 245.1,260.4 245.4,261.6 245.1,262.7 246.6,263.6 247.4,264.8 248.0,265.6 249.3,267.0 250.1,268.5 249.5,270.5 249.5,271.6 249.4,272.8 248.3,273.4 247.6,274.6 245.8,275.0 245.1,276.4 243.6,276.0 242.2,276.4 241.9,275.0 241.3,273.8 241.4,272.8 240.2,272.7 239.3,272.1 237.8,271.0 235.7,270.7 234.6,269.1 234.5,267.8 234.2,266.3 233.6,265.4 232.6,263.9 232.0,262.0 231.6,260.8 231.3,259.8 232.7,259.7 234.2,259.3 236.4,259.0 237.0,257.6 237.3,256.7 237.5,255.2 237.1,253.3 237.4,252.0 237.5,250.9 239.0,249.6" fill="#DDF2FD" stroke="#80919d" stroke-width="0.7" stroke-linejoin="round"/>
<polygon points="251.2,376.3 252.2,375.1 253.7,374.6 255.2,373.9 255.8,373.0 256.9,373.5 258.0,373.7 260.1,373.4 261.4,374.1 261.8,375.6 262.3,377.3 262.1,378.5 260.9,379.8 259.6,380.6 258.6,382.0 257.2,383.1 255.7,383.1 254.7,383.7 254.0,384.7 252.8,383.3 251.6,382.7 250.8,382.0 250.8,380.7 250.7,379.5 250.7,378.0" fill="#DDF2FD" stroke="#80919d" stroke-width="0.7" stroke-linejoin="round"/>
<polygon points="312.6,339.1 313.8,339.4 315.4,340.0 314.8,341.3 315.1,342.7 315.2,344.2 315.4,345.6 315.6,348.1 314.9,350.2 314.2,351.8 312.6,354.0 312.5,355.9 312.2,357.2 311.0,358.3 310.4,359.6 309.9,357.6 308.8,356.6 308.0,355.9 307.5,354.2 307.7,353.0 307.4,351.6 307.0,350.3 307.1,348.0 307.8,346.2 308.3,345.0 309.3,343.8 310.3,342.9 311.1,342.4 311.7,340.3" fill="#DDF2FD" stroke="#80919d" stroke-width="0.7" stroke-linejoin="round"/>
<polyline points="106.0,279.7 107.2,278.6 108.2,276.8 109.7,275.0 112.2,274.2 115.7,274.1 117.8,275.2 121.5,272.7 124.6,272.7 126.6,272.2 129.3,272.8 132.1,272.1 134.5,271.0 137.6,270.5 139.8,270.2 142.7,269.6 145.7,267.3 150.3,268.4 153.2,267.4 155.6,267.6 158.1,268.5" fill="none" stroke="#80919d" stroke-width="0.7" stroke-linejoin="round"/>
<polyline points="158.1,268.5 160.2,268.1 161.6,267.0 162.7,267.5 164.3,267.3 164.8,265.8 165.2,264.6 165.0,262.9 165.6,261.0 164.0,260.2 162.5,258.8 161.9,256.2 160.6,253.6 164.4,252.8 166.9,252.7 168.9,250.9 171.8,249.9" fill="none" stroke="#80919d" stroke-width="0.7" stroke-linejoin="round"/>
<polyline points="171.8,249.9 173.7,248.0 174.3,245.8 174.7,242.4 175.5,240.0 178.3,238.1 182.0,236.7 183.9,233.3 186.6,232.0 186.9,229.7 188.8,227.8 190.0,226.4 190.8,225.5" fill="none" stroke="#80919d" stroke-width="0.7" stroke-linejoin="round"/>
<polyline points="158.1,268.5 159.2,270.1 159.2,272.8 158.2,274.5 158.1,276.0 158.5,278.2 158.0,279.8 159.2,282.4 160.6,284.7 163.1,285.7 165.8,286.7 167.8,288.6 169.3,289.6 171.4,290.4 174.1,291.9 178.8,291.2 181.7,292.1 183.3,293.4 184.4,295.4 186.2,296.0 188.0,297.0 189.7,295.9 191.0,295.8 192.7,296.2 194.2,295.8 194.7,294.1 194.6,292.5 195.7,291.1 196.6,289.6 196.7,288.1 196.8,286.0" fill="none" stroke="#80919d" stroke-width="0.7" stroke-linejoin="round"/>
<polyline points="203.7,316.0 202.9,316.5 201.9,317.3 200.8,318.6 200.5,320.0" fill="none" stroke="#80919d" stroke-width="0.7" stroke-linejoin="round"/>
<polyline points="171.8,249.9 174.1,250.9 176.2,250.6 177.4,251.2 179.3,251.0 181.7,251.6 185.2,252.3 187.7,253.6 189.2,254.8 189.6,253.4 190.3,252.3 191.4,250.5 193.6,249.6 194.7,249.1 195.9,249.1 197.5,249.7 198.7,249.6 199.8,250.4 201.0,251.5 202.8,251.7 204.5,251.8 205.8,252.8 206.8,253.3 208.8,254.0 210.6,255.0 211.9,255.8 213.1,256.8 213.9,257.6 215.2,258.3 216.4,258.4 217.8,259.4 219.0,261.2 220.6,261.9 222.1,264.1 222.1,265.6 222.6,267.0 222.3,268.6 221.0,270.4 220.8,271.4 221.2,272.8 220.6,273.9 220.5,275.2 219.8,276.7 219.0,277.9 217.7,277.8 216.3,278.2 214.7,279.1 213.9,280.0 214.4,281.6 215.2,282.6 216.1,284.4 217.3,284.7 218.3,285.1 217.5,286.4 217.5,287.5" fill="none" stroke="#80919d" stroke-width="0.7" stroke-linejoin="round"/>
<polyline points="195.4,226.0 195.6,228.1 196.4,229.7 197.2,230.9 198.0,232.2 198.7,234.1 199.5,235.5 200.4,236.8 200.9,238.8 202.9,238.8 204.5,238.1 205.9,238.0 207.7,238.9 209.6,239.5 209.4,240.7 208.9,241.6 208.5,242.7 208.1,243.8 208.8,244.8 210.2,245.4 211.4,246.9 212.5,248.2 213.7,248.4 214.5,249.1 215.9,249.8 216.8,251.0 217.2,250.1 218.4,249.1 219.7,248.8 220.4,248.2 221.4,248.6 222.8,248.7 224.7,248.2 226.2,247.5 227.4,247.7 229.1,248.2 228.4,249.5 228.6,250.8 228.4,251.8 227.2,253.1 226.2,254.0 226.2,255.1 226.3,256.3 227.0,257.6 228.1,258.6 229.0,259.0 230.1,259.1 231.3,259.8" fill="none" stroke="#80919d" stroke-width="0.7" stroke-linejoin="round"/>
<polyline points="244.3,257.6 244.2,259.8 243.4,261.1 241.6,262.0 240.7,263.4 240.9,264.5 241.3,266.1 240.6,267.3 240.7,268.5 240.9,270.6 241.3,271.8 241.4,272.8" fill="none" stroke="#80919d" stroke-width="0.7" stroke-linejoin="round"/>
<polyline points="245.1,276.4 243.6,276.1 242.4,276.4 240.7,277.2 241.1,278.4 241.1,280.0 240.8,281.8 240.0,283.0 239.3,285.4 238.0,286.3 237.8,287.6 237.8,288.8 236.9,290.0 236.4,291.2" fill="none" stroke="#80919d" stroke-width="0.7" stroke-linejoin="round"/>
<polyline points="244.3,257.6 245.8,258.3 246.8,258.7 248.5,258.9 250.9,259.0 252.2,256.8 253.7,255.5 254.0,254.2 253.8,252.5 254.8,251.1 255.7,249.9 256.8,249.2 258.1,248.9 259.6,248.8 260.8,248.2 262.5,247.5" fill="none" stroke="#80919d" stroke-width="0.7" stroke-linejoin="round"/>
<polyline points="262.5,247.5 262.4,249.2 262.6,250.4 262.0,252.7 261.0,254.0 261.2,256.4 260.6,258.2 260.6,259.8 260.3,261.2 259.3,262.8 259.1,265.4 258.9,267.2 259.6,268.5 259.9,269.9 259.3,271.3 258.5,273.1 258.1,274.3 258.6,275.1 259.2,276.4 260.1,278.1" fill="none" stroke="#80919d" stroke-width="0.7" stroke-linejoin="round"/>
<polyline points="262.5,247.5 264.2,246.1 265.5,245.7 266.8,244.6 268.1,244.0 269.2,243.1 271.1,241.9 272.6,241.7 274.1,241.5 275.1,241.0 277.0,240.2" fill="none" stroke="#80919d" stroke-width="0.7" stroke-linejoin="round"/>
<polyline points="255.9,288.3 255.3,289.6 254.4,290.2 253.2,290.4 252.3,291.2 251.2,291.7 249.8,293.1 248.7,294.8" fill="none" stroke="#80919d" stroke-width="0.7" stroke-linejoin="round"/>
<polyline points="248.7,294.8 249.8,296.4 250.7,297.2 252.3,297.7 253.8,298.4 254.7,299.3 256.7,299.9" fill="none" stroke="#80919d" stroke-width="0.7" stroke-linejoin="round"/>
<polyline points="228.4,323.2 227.6,323.8 226.8,324.9 226.2,326.8 226.8,327.6 226.9,329.0 228.4,330.4 229.0,331.6 229.5,332.5 229.9,333.6 229.9,334.8 230.3,336.4 230.4,337.6 232.0,339.0 232.0,340.6 231.4,341.6 232.0,343.5" fill="none" stroke="#80919d" stroke-width="0.7" stroke-linejoin="round"/>
<polyline points="228.4,321.0 229.6,321.5 230.6,321.5 232.2,321.7 233.5,321.7 235.2,321.3 236.6,320.8 237.8,320.3 239.2,319.1 240.0,317.4 241.4,315.8 243.5,315.6 245.1,314.3 246.2,314.2 247.3,314.1 249.4,314.5 250.4,315.8 252.3,316.7" fill="none" stroke="#80919d" stroke-width="0.7" stroke-linejoin="round"/>
<polyline points="237.8,315.1 239.4,314.9 240.6,315.2 241.4,315.8" fill="none" stroke="#80919d" stroke-width="0.7" stroke-linejoin="round"/>
<polyline points="302.6,233.5 303.1,231.5 303.5,229.8 304.4,229.8 305.7,229.8 307.3,230.7 308.8,229.1 310.6,228.7 311.9,228.1 312.9,228.0 314.7,227.1 316.4,226.4 318.6,224.7 320.3,224.2 321.0,223.6 321.8,222.5 322.7,221.6 324.0,221.4" fill="none" stroke="#80919d" stroke-width="0.7" stroke-linejoin="round"/>
<polyline points="324.0,221.4 323.6,219.2 322.4,218.1 321.0,217.0 319.4,215.8 318.5,214.8 317.2,214.1 315.9,212.6 315.6,210.2 315.9,208.8 315.4,207.5 314.7,205.6 316.9,205.0 318.9,204.3 320.1,203.3 321.0,202.4" fill="none" stroke="#80919d" stroke-width="0.7" stroke-linejoin="round"/>
<polyline points="321.0,202.4 319.8,201.0 319.3,199.8 318.8,198.9 318.3,197.8 319.2,196.3 319.3,195.3 320.0,194.0 321.2,192.9 322.5,191.9 324.2,191.5 325.7,190.3 326.2,188.3 326.9,187.5 327.6,186.6 328.9,184.9 330.1,184.1 331.3,183.8 331.8,182.7 331.4,181.1 332.0,180.3 332.2,179.0 332.9,177.2 333.0,175.1 334.1,174.0 335.0,172.6 333.9,171.7 333.5,170.6 332.2,168.9 330.9,169.2 330.0,169.5 328.6,169.6 327.6,169.8 326.3,170.2 324.8,170.5 323.3,170.1 321.0,169.8 319.7,168.9 319.0,167.4 318.2,165.5 318.3,164.2 317.7,163.1 316.6,162.2 314.4,162.3 312.7,161.4 313.3,159.5 314.1,157.6 314.5,156.4" fill="none" stroke="#80919d" stroke-width="0.7" stroke-linejoin="round"/>
<polyline points="321.0,202.4 321.6,203.9 322.9,204.9 324.6,205.3 326.0,206.0 328.0,207.0 329.9,208.0 331.6,207.8 333.0,208.2 334.5,209.0 335.8,209.3 337.3,210.6 340.0,211.5 340.6,212.8 341.4,213.7 343.2,215.3 344.6,216.0 345.5,217.3 346.6,218.5 347.7,218.7 349.1,219.4 350.4,219.8 352.5,219.8 353.4,219.7 354.8,219.3 355.4,218.6 356.7,218.0 357.8,218.6 359.6,218.7 360.1,219.5 361.3,220.5" fill="none" stroke="#80919d" stroke-width="0.7" stroke-linejoin="round"/>
<polyline points="324.0,221.4 324.8,222.2 326.4,223.0 327.2,224.3 327.8,225.2 328.4,226.5 328.9,228.1 329.7,229.6 330.6,230.7 330.9,232.2 332.4,233.9 333.5,234.8 334.3,236.0" fill="none" stroke="#80919d" stroke-width="0.7" stroke-linejoin="round"/>
<line x1="322.9" y1="336.3" x2="323.4" y2="337.2" stroke="#80919d" stroke-width="0.6"/>
<line x1="329" y1="334.2" x2="329.4" y2="335" stroke="#80919d" stroke-width="0.6"/>
<line x1="322.9" y1="342.8" x2="323.2" y2="348.4" stroke="#80919d" stroke-width="0.6"/>
<line x1="318.2" y1="361.5" x2="319.5" y2="365.2" stroke="#80919d" stroke-width="0.6"/>
<line x1="309.8" y1="378.2" x2="310.6" y2="382" stroke="#80919d" stroke-width="0.6"/>
<line x1="286.6" y1="366.1" x2="287" y2="367" stroke="#80919d" stroke-width="0.6"/>
<line x1="290.3" y1="368.9" x2="290.8" y2="369.8" stroke="#80919d" stroke-width="0.6"/>
<rect x="335.5" y="306.8" width="53.5" height="79.9" fill="#fff" stroke="#a8a8a8" stroke-width="0.8"/>
<polygon points="336,307.2 354.5,307.2 353.5,310 350,312.5 347,313.5 344,312 340.5,312.8 337.5,311 336,309" fill="#B4E6FB" stroke="#80919d" stroke-width="0.5"/>
<polygon points="354.5,307.2 372,307.2 370,309 365,310 360,311.5 356,313 352.5,314.5 350.5,316.5 350,314 351,312 353.5,310" fill="#33B9F5" stroke="#80919d" stroke-width="0.4"/>
<polygon points="346.2,321.5 348.5,319.3 351.8,319.5 353,321.5 351.5,324.5 348.8,326 346.5,324.8" fill="#DDF2FD" stroke="#80919d" stroke-width="0.6"/>
<polygon points="383.5,307.2 387.3,307.2 386.8,310 385.6,311.6 384.2,309.8" fill="#DDF2FD" stroke="#80919d" stroke-width="0.5"/>
<rect x="363" y="377.8" width="26" height="8.9" fill="#fff" stroke="#a8a8a8" stroke-width="0.7"/>
<text x="376" y="384.6" font-size="5.2" text-anchor="middle" fill="#777" font-family="Liberation Sans, Noto Sans CJK SC, sans-serif">南海诸岛</text>
<line x1="347.5" y1="331" x2="348.3" y2="336" stroke="#a9b3ba" stroke-width="0.5"/>
<line x1="356" y1="331.5" x2="356.6" y2="332.5" stroke="#a9b3ba" stroke-width="0.5"/>
<line x1="358.5" y1="332.5" x2="359" y2="333" stroke="#a9b3ba" stroke-width="0.5"/>
<line x1="363.5" y1="333.5" x2="364" y2="334.5" stroke="#a9b3ba" stroke-width="0.5"/>
<line x1="366.5" y1="333" x2="367" y2="334" stroke="#a9b3ba" stroke-width="0.5"/>
<line x1="375" y1="338" x2="376" y2="334" stroke="#a9b3ba" stroke-width="0.5"/>
<line x1="381" y1="334" x2="380.5" y2="338" stroke="#a9b3ba" stroke-width="0.5"/>
<line x1="387" y1="312" x2="386.6" y2="318" stroke="#a9b3ba" stroke-width="0.5"/>
<line x1="382" y1="323" x2="381" y2="328" stroke="#a9b3ba" stroke-width="0.5"/>
<line x1="351.5" y1="347.5" x2="350.5" y2="351.5" stroke="#a9b3ba" stroke-width="0.5"/>
<line x1="364.5" y1="349.5" x2="365" y2="351" stroke="#a9b3ba" stroke-width="0.5"/>
<line x1="372.5" y1="347.5" x2="373" y2="349" stroke="#a9b3ba" stroke-width="0.5"/>
<line x1="380" y1="348" x2="379.5" y2="352" stroke="#a9b3ba" stroke-width="0.5"/>
<line x1="365.5" y1="356" x2="366" y2="357.5" stroke="#a9b3ba" stroke-width="0.5"/>
<line x1="369.5" y1="354.5" x2="370" y2="356" stroke="#a9b3ba" stroke-width="0.5"/>
<line x1="362" y1="358.5" x2="362.5" y2="359.5" stroke="#a9b3ba" stroke-width="0.5"/>
<line x1="357" y1="362" x2="357.5" y2="363" stroke="#a9b3ba" stroke-width="0.5"/>
<line x1="367" y1="361" x2="367.5" y2="362" stroke="#a9b3ba" stroke-width="0.5"/>
<line x1="371" y1="359.5" x2="372" y2="362.5" stroke="#a9b3ba" stroke-width="0.5"/>
<line x1="351.5" y1="362.5" x2="352" y2="363.5" stroke="#a9b3ba" stroke-width="0.5"/>
<line x1="344" y1="365" x2="344.5" y2="367.5" stroke="#a9b3ba" stroke-width="0.5"/>
<line x1="349" y1="364.5" x2="349.5" y2="365.5" stroke="#a9b3ba" stroke-width="0.5"/>
<line x1="359.5" y1="367.5" x2="360" y2="368.5" stroke="#a9b3ba" stroke-width="0.5"/>
<line x1="370" y1="362.5" x2="369.5" y2="365" stroke="#a9b3ba" stroke-width="0.5"/>
<line x1="357.5" y1="377.5" x2="360" y2="376.5" stroke="#a9b3ba" stroke-width="0.5"/>
<line x1="374.5" y1="352" x2="375" y2="353.5" stroke="#a9b3ba" stroke-width="0.5"/>
<rect x="610" y="183.70" width="127.5" height="1.8" rx=".6" fill="#ededed"/>
<rect x="610" y="183.60" width="127.5" height="2" rx=".7" fill="#3bb7ee"/>
<rect x="610" y="206.03" width="127.5" height="1.8" rx=".6" fill="#ededed"/>
<rect x="610" y="205.93" width="85.0" height="2" rx=".7" fill="#3bb7ee"/>
<rect x="610" y="228.36" width="127.5" height="1.8" rx=".6" fill="#ededed"/>
<rect x="610" y="228.26" width="74.5" height="2" rx=".7" fill="#3bb7ee"/>
<rect x="610" y="250.69" width="127.5" height="1.8" rx=".6" fill="#ededed"/>
<rect x="610" y="250.59" width="57.0" height="2" rx=".7" fill="#3bb7ee"/>
<rect x="610" y="273.02" width="127.5" height="1.8" rx=".6" fill="#ededed"/>
<rect x="610" y="272.92" width="54.4" height="2" rx=".7" fill="#3bb7ee"/>
<rect x="610" y="295.35" width="127.5" height="1.8" rx=".6" fill="#ededed"/>
<rect x="610" y="295.25" width="54.4" height="2" rx=".7" fill="#3bb7ee"/>
<rect x="610" y="317.68" width="127.5" height="1.8" rx=".6" fill="#ededed"/>
<rect x="610" y="317.58" width="49.5" height="2" rx=".7" fill="#3bb7ee"/>
<rect x="610" y="340.01" width="127.5" height="1.8" rx=".6" fill="#ededed"/>
<rect x="610" y="339.91" width="44.5" height="2" rx=".7" fill="#3bb7ee"/>
<rect x="610" y="362.34" width="127.5" height="1.8" rx=".6" fill="#ededed"/>
<rect x="610" y="362.24" width="44.5" height="2" rx=".7" fill="#3bb7ee"/>
<rect x="610" y="384.67" width="127.5" height="1.8" rx=".6" fill="#ededed"/>
<rect x="610" y="384.57" width="37.0" height="2" rx=".7" fill="#3bb7ee"/>
</svg>

<!-- map legend -->
<div class="t" style="left:70.5px;top:359.200px;font-size:6.8px;color:#333">搜索指数</div>
<div class="t" style="left:70.5px;top:368px;font-size:6.8px;color:#777">高</div>
<div style="left:80.6px;top:368.700px;width:5px;height:5px;background:#33b9f5"></div>
<div style="left:89.9px;top:368.700px;width:5px;height:5px;background:#5bc6f6"></div>
<div style="left:99px;top:368.700px;width:5px;height:5px;background:#85d5f9"></div>
<div style="left:108.2px;top:368.700px;width:5px;height:5px;background:#b4e6fb"></div>
<div style="left:117.4px;top:368.700px;width:5px;height:5px;background:#ddf2fd"></div>
<div class="t" style="left:126px;top:368px;font-size:6.8px;color:#777">低</div>

<!-- right list -->
<div class="t" style="left:481px;top:151.800px;font-size:6.8px;color:#222">省份</div>
<div class="t" style="left:505.5px;top:151.800px;font-size:6.8px;color:#555">区域</div>
<div class="t" style="left:530px;top:151.800px;font-size:6.8px;color:#555">城市</div>
<div style="left:475px;top:166px;width:276.5px;height:1px;background:#e4e4e4"></div>
<div class="rk" style="top:180.4px"><span class="no">1.</span><span class="nm">广东</span></div>
<div class="rk" style="top:202.7px"><span class="no">2.</span><span class="nm">江苏</span></div>
<div class="rk" style="top:225.1px"><span class="no">3.</span><span class="nm">浙江</span></div>
<div class="rk" style="top:247.4px"><span class="no">4.</span><span class="nm">山东</span></div>
<div class="rk" style="top:269.7px"><span class="no">5.</span><span class="nm">四川</span></div>
<div class="rk" style="top:292.1px"><span class="no">6.</span><span class="nm">河南</span></div>
<div class="rk" style="top:314.4px"><span class="no">7.</span><span class="nm">上海</span></div>
<div class="rk" style="top:336.7px"><span class="no">8.</span><span class="nm">北京</span></div>
<div class="rk" style="top:359.0px"><span class="no">9.</span><span class="nm">湖北</span></div>
<div class="rk" style="top:381.4px"><span class="no">10.</span><span class="nm">福建</span></div>


<!-- side toolbar -->
<div style="left:765.4px;top:337.600px;width:21.2px;height:66.400px;background:#f8f8f8"></div>
<svg style="left:769.5px;top:343px" width="12" height="12" viewBox="0 0 12 12" fill="none" stroke="#8a8a8a" stroke-width=".8">
  <circle cx="2.600" cy="6" r="1.700"/><circle cx="9" cy="2.400" r="1.700"/><circle cx="9" cy="9.600" r="1.700"/><path d="M4.100 5.200l3.400-2M4.100 6.800l3.400 2"/>
</svg>
<svg style="left:769.5px;top:365.500px" width="12" height="12" viewBox="0 0 12 12" fill="none" stroke="#8a8a8a" stroke-width=".8" stroke-linejoin="round">
  <path d="M6 .9l1.600 3.300 3.600.5-2.600 2.500.6 3.600L6 9.100l-3.200 1.700.6-3.600L.8 4.700l3.600-.5z"/>
</svg>
<svg style="left:769.5px;top:387.500px" width="12" height="12" viewBox="0 0 12 12" fill="none" stroke="#8a8a8a" stroke-width=".8">
  <circle cx="6" cy="6" r="5"/>
</svg>
<div class="t" style="left:773.5px;top:390px;font-size:7px;color:#8a8a8a">?</div>

<!-- card 2 -->
<div class="card" style="left:37.3px;top:413.800px;width:726.600px;height:80px"></div>
<div class="t" style="left:49.5px;top:425.300px;font-size:7.9px;color:#222">人群属性</div>
<div class="q" style="left:84px;top:424.100px">?</div>
<div style="left:49.5px;top:440.500px;width:702px;height:1px;background:#ededed"></div>
<div style="left:49.5px;top:440.100px;width:31.5px;height:1.2px;background:#2d78ee"></div>
<div class="t" style="left:669px;top:425.500px;font-size:7.3px;color:#333">2023-03-01 ~ 2023-03-31</div>
<div style="left:386px;top:447.500px;width:1px;height:40px;background:#e6e6e6"></div>
<div class="t" style="left:204.3px;top:449.900px;font-size:6.8px;color:#333">年龄分布</div>
<div class="t" style="left:560.5px;top:449.900px;font-size:6.8px;color:#333">性别分布</div>

<div style="left:49.5px;top:469px;width:5px;height:5px;background:#38b6f3;border-radius:.5px"></div>
<div class="t" style="left:57px;top:469.300px;font-size:6.7px;color:#777">星穹铁道</div>
<div style="left:90px;top:469px;width:5px;height:5px;background:#dedede;border-radius:.5px"></div>
<div class="t" style="left:98px;top:469.300px;font-size:6.7px;color:#777">全网分布</div>
<svg style="left:130px;top:468.400px" width="7" height="7" viewBox="0 0 7 7"><circle cx="3.400" cy="3.400" r="2.400" fill="#fff" stroke="#3a7fe8" stroke-width=".9"/></svg>
<div class="t" style="left:140px;top:469.300px;font-size:6.7px;color:#777">TGI</div>

<div style="left:399px;top:469px;width:5px;height:5px;background:#38b6f3;border-radius:.5px"></div>
<div class="t" style="left:406.5px;top:469.300px;font-size:6.7px;color:#777">星穹铁道</div>
<div style="left:439.5px;top:469px;width:5px;height:5px;background:#dedede;border-radius:.5px"></div>
<div class="t" style="left:447.5px;top:469.300px;font-size:6.7px;color:#777">全网分布</div>
<svg style="left:479.500px;top:468.400px" width="7" height="7" viewBox="0 0 7 7"><circle cx="3.400" cy="3.400" r="2.400" fill="#fff" stroke="#3a7fe8" stroke-width=".9"/></svg>
<div class="t" style="left:489.5px;top:469.300px;font-size:6.7px;color:#777">TGI</div>
</div>
</body></html>
